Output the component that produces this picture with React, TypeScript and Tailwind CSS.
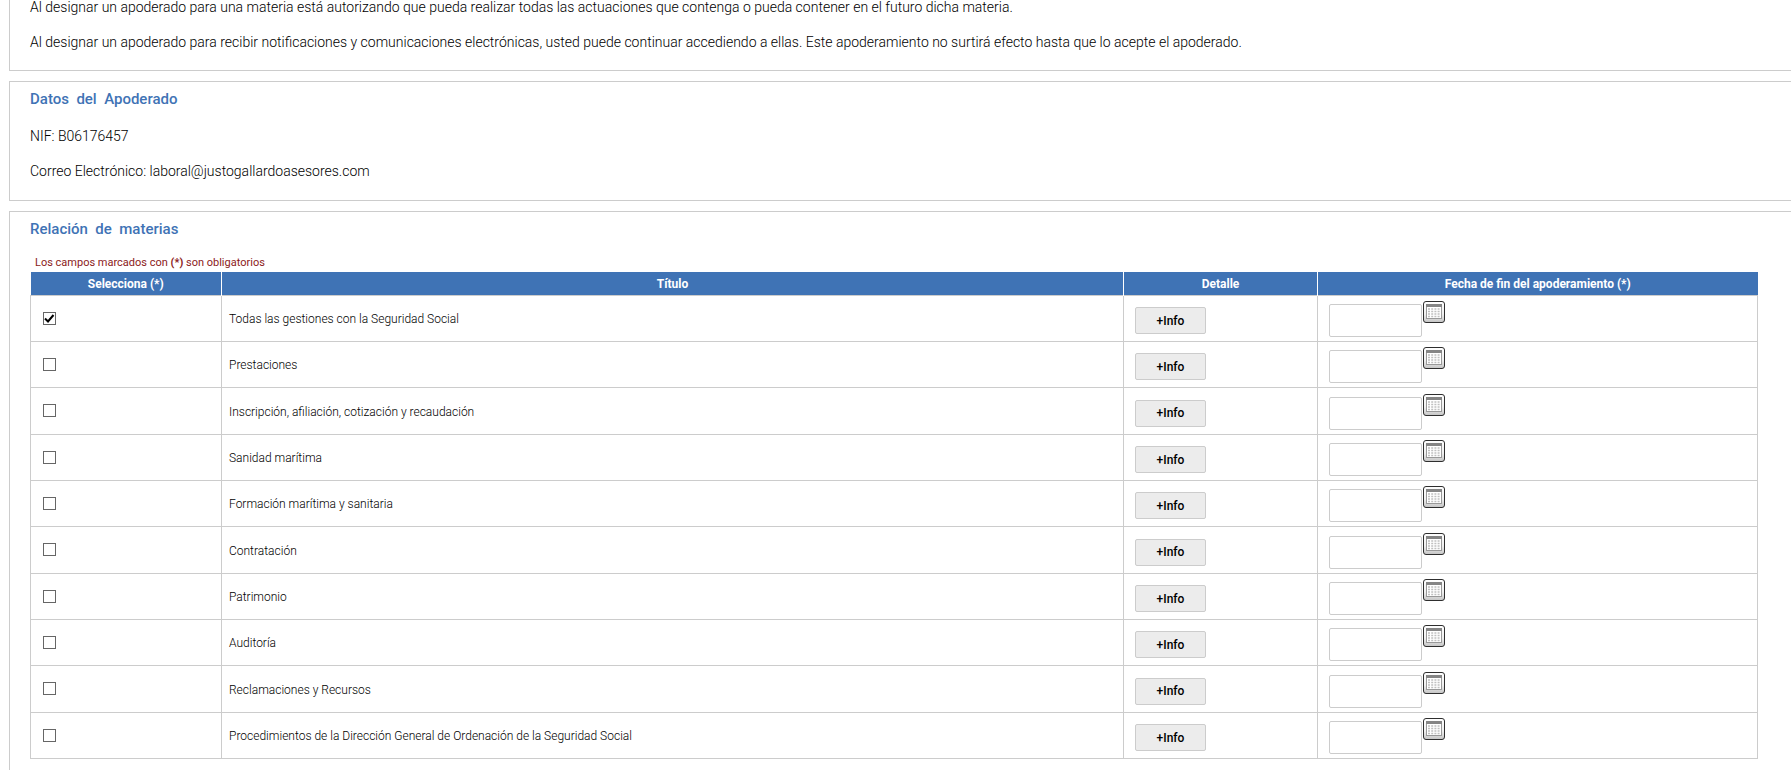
import React from "react";

const materias = [
  "Todas las gestiones con la Seguridad Social",
  "Prestaciones",
  "Inscripción, afiliación, cotización y recaudación",
  "Sanidad marítima",
  "Formación marítima y sanitaria",
  "Contratación",
  "Patrimonio",
  "Auditoría",
  "Reclamaciones y Recursos",
  "Procedimientos de la Dirección General de Ordenación de la Seguridad Social",
];

const CalendarIcon = () => (
  <svg width="22" height="22" viewBox="0 0 22 22" aria-hidden="true">
    <defs>
      <linearGradient id="marco" x1="0" y1="0" x2="0" y2="1">
        <stop offset="0" stopColor="#ffffff" />
        <stop offset="0.6" stopColor="#f0f0f0" />
        <stop offset="1" stopColor="#c4c4c4" />
      </linearGradient>
    </defs>
    <rect x="0.5" y="0.5" width="21" height="21" rx="2.5" fill="url(#marco)" stroke="#2e2e2e" />
    <rect x="3.5" y="3.5" width="15" height="14" fill="#ffffff" stroke="#999999" />
    <rect x="3" y="3" width="16" height="3" fill="#858585" />
    <path
      d="M5 8h12M5 10.5h12M5 13h12M5 15.5h12"
      stroke="#c0c0c0"
      strokeWidth="1.5"
      strokeDasharray="2 1.2"
    />
  </svg>
);

const Panel = ({ children }: { children: React.ReactNode }) => (
  <section className="border border-r-0 border-[#cccccc] pl-5 pr-[33px]">{children}</section>
);

const Titulo = ({ children }: { children: string }) => (
  <h2 className="pt-2 text-[15px] leading-[18px] font-medium whitespace-pre text-[#3f73b5]">
    {children}
  </h2>
);

const App = () => {
  return (
    <main className="h-screen overflow-hidden bg-white pl-[9px] font-['Roboto',sans-serif] text-black">
      <div className="flex flex-col gap-[10px]">
        <section className="flex flex-col gap-5 border-b border-l border-[#cccccc] pr-[33px] pb-5 pl-5 text-sm leading-[15px] font-light">
          <p>
            Al designar un apoderado para una materia está autorizando que pueda realizar todas las
            actuaciones que contenga o pueda contener en el futuro dicha materia.
          </p>
          <p>
            Al designar un apoderado para recibir notificaciones y comunicaciones electrónicas,
            usted puede continuar accediendo a ellas. Este apoderamiento no surtirá efecto hasta que
            lo acepte el apoderado.
          </p>
        </section>

        {/* Datos del apoderado */}
        <Panel>
          <Titulo>{"Datos  del  Apoderado"}</Titulo>
          <div className="flex flex-col gap-5 pt-[21px] pb-[21px] text-sm leading-[15px] font-light">
            <p>NIF: B06176457</p>
            <p>Correo Electrónico: laboral@justogallardoasesores.com</p>
          </div>
        </Panel>

        {/* Relación de materias */}
        <Panel>
          <Titulo>{"Relación  de  materias"}</Titulo>
          <p className="pt-[19px] pb-[3px] pl-[5px] text-[11px] leading-3 text-[#8b1a1a]">
            Los campos marcados con <b>(*)</b> son obligatorios
          </p>
          <table className="mb-5 w-full table-fixed border-collapse text-xs">
            <thead>
              <tr className="h-[23px] bg-[#3f73b5] text-white">
                <th className="w-[191px] border-r border-white pt-0.5 font-bold">Selecciona (*)</th>
                <th className="border-r border-white pt-0.5 font-bold">Título</th>
                <th className="w-[194px] border-r border-white pt-0.5 font-bold">Detalle</th>
                <th className="w-[440px] pt-0.5 font-bold">Fecha de fin del apoderamiento (*)</th>
              </tr>
            </thead>
            <tbody>
              {materias.map((materia, i) => (
                <tr key={materia} className="h-[46px] nth-[3n]:h-[47px]">
                  <td className="border border-[#cccccc] pl-3">
                    <span className="relative block size-[13px]">
                      <input
                        type="checkbox"
                        id={`materia-${i}`}
                        defaultChecked={i === 0}
                        className="peer block size-[13px] appearance-none border border-[#666666] bg-white"
                      />
                      <svg
                        viewBox="0 0 13 13"
                        className="pointer-events-none absolute inset-0 hidden size-[13px] peer-checked:block"
                      >
                        <path d="M2 6.5 5 9.5 10.5 3" fill="none" stroke="#000000" strokeWidth="2" />
                      </svg>
                    </span>
                  </td>
                  <td className="border border-[#cccccc] pt-0.5 pl-[7px] font-light">
                    <label htmlFor={`materia-${i}`}>{materia}</label>
                  </td>
                  <td className="border border-[#cccccc] pt-[5px] pl-[11px]">
                    <button
                      type="button"
                      className="block h-[27px] w-[71px] rounded-xs border border-[#cccccc] bg-[#ececec] font-medium"
                    >
                      +Info
                    </button>
                  </td>
                  <td className="border border-[#cccccc] pt-0.5 pl-[11px]">
                    <div className="flex items-start gap-px">
                      <input
                        type="text"
                        aria-label={`Fecha de fin: ${materia}`}
                        className="mt-[3px] h-[33px] w-[93px] rounded-xs border border-[#cccccc] px-2"
                      />
                      <button type="button" aria-label="Calendario">
                        <CalendarIcon />
                      </button>
                    </div>
                  </td>
                </tr>
              ))}
            </tbody>
          </table>
        </Panel>
      </div>
    </main>
  );
};

export default App;
